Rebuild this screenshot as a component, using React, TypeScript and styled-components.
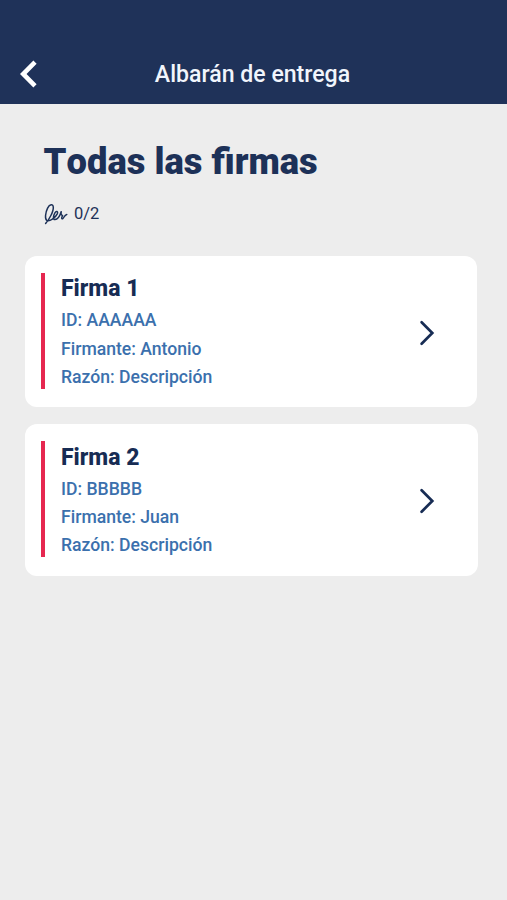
import React from "react";
import styled, { createGlobalStyle } from "styled-components";

const GlobalStyle = createGlobalStyle`
  * { box-sizing: border-box; }
  body { margin: 0; background: #ededed; font-family: Roboto, sans-serif; }
`;

const Screen = styled.div`
  min-height: 900px;
  background: #ededed;
  color: #1d3158;
`;

const Header = styled.header`
  height: 103.5px;
  padding: 44px 20px 0;
  display: grid;
  grid-template-columns: 40px 1fr 42px;
  align-items: center;
  background: #1f3259;
`;

const BackButton = styled.button`
  display: flex;
  padding: 0;
  border: 0;
  background: none;
  color: #fff;
`;

const HeaderTitle = styled.h1`
  margin: 0;
  padding-top: 2px;
  color: #f1f5fc;
  font-size: 23.1px;
  font-weight: 500;
  line-height: 28px;
  text-align: center;
  white-space: nowrap;
`;

const Main = styled.main`
  padding: 34px 25px 0;
`;

const Title = styled.h2`
  margin: 0 0 0 18.5px;
  font-size: 36.4px;
  font-weight: 900;
  font-kerning: none;
  line-height: 48px;
  white-space: nowrap;
`;

const Progress = styled.div`
  display: flex;
  align-items: center;
  gap: 5px;
  height: 24px;
  margin: 16px 0 30px 19px;
  font-size: 16.5px;
`;

const CardList = styled.div`
  display: flex;
  flex-direction: column;
  gap: 16.5px;
`;

const Card = styled.article<{ $width: number }>`
  display: flex;
  align-items: center;
  width: ${({ $width }) => $width}px;
  height: 151.8px;
  padding: 0 0 0 16px;
  border-radius: 12px;
  background: #fff;
`;

const Accent = styled.span`
  width: 3.6px;
  height: 116px;
  margin: 0 16.4px 1.5px 0;
  background: #e62850;
`;

const Details = styled.div`
  width: 357.6px;
  padding-top: 1px;
`;

const CardTitle = styled.h3`
  margin: 0;
  color: #172c54;
  font-size: 23px;
  font-weight: 800;
  line-height: 34px;
`;

const Detail = styled.p`
  margin: 0;
  color: #3b70ad;
  font-size: 17.6px;
  font-weight: 500;
  line-height: 28.4px;
`;

const BackIcon = () => (
  <svg width="18" height="28" viewBox="0 0 18 28" fill="none" stroke="currentColor" strokeWidth="4.6">
    <path d="M15 2.2 3.2 14 15 25.8" />
  </svg>
);

const NextIconSvg = styled.svg`
  margin-top: 3px;
`;

const NextIcon = () => (
  <NextIconSvg width="16" height="26" viewBox="0 0 16 26" fill="none" stroke="#172c54" strokeWidth="2.7">
    <path d="M2.6 2.3 13.3 13 2.6 23.7" strokeLinecap="round" />
  </NextIconSvg>
);

const SignatureIcon = () => (
  <svg width="25" height="24" viewBox="0 0 25 24" fill="none" stroke="#1d3158" strokeWidth="1.5" strokeLinecap="round" strokeLinejoin="round">
    <path d="M1.6 21.5C4.8 17.8 9.6 10 9.3 5.2 9.1 1.7 5.7 2 3.6 6.2 1.3 10.8.7 17 2.8 18.4 5.4 20 11.6 15.6 13.4 11.6 14.2 9.3 12.2 8.6 10.9 10.8 9.2 13.7 8.7 17.7 11 17.6 13.4 17.5 16 13.5 17.2 9.8 16.6 11.8 17.4 13.2 18.6 13.6 17.5 15.2 17.3 17.3 18.7 16.7 20.1 16.1 20.2 12.8 22.8 12.4" />
  </svg>
);

const signatures = [
  { title: "Firma 1", id: "AAAAAA", signer: "Antonio", reason: "Descripción", width: 451.5 },
  { title: "Firma 2", id: "BBBBB", signer: "Juan", reason: "Descripción", width: 452.5 },
];

export default function App() {
  return (
    <Screen>
      <GlobalStyle />
      <Header>
        <BackButton aria-label="Volver"><BackIcon /></BackButton>
        <HeaderTitle>Albarán de entrega</HeaderTitle>
      </Header>
      <Main>
        <Title>Todas las firmas</Title>
        <Progress><SignatureIcon /><span>0/2</span></Progress>
        <CardList>
          {signatures.map((item) => (
            <Card key={item.title} $width={item.width}>
              <Accent />
              <Details>
                <CardTitle>{item.title}</CardTitle>
                <Detail>ID: {item.id}</Detail>
                <Detail>Firmante: {item.signer}</Detail>
                <Detail>Razón: {item.reason}</Detail>
              </Details>
              <NextIcon />
            </Card>
          ))}
        </CardList>
      </Main>
    </Screen>
  );
}
